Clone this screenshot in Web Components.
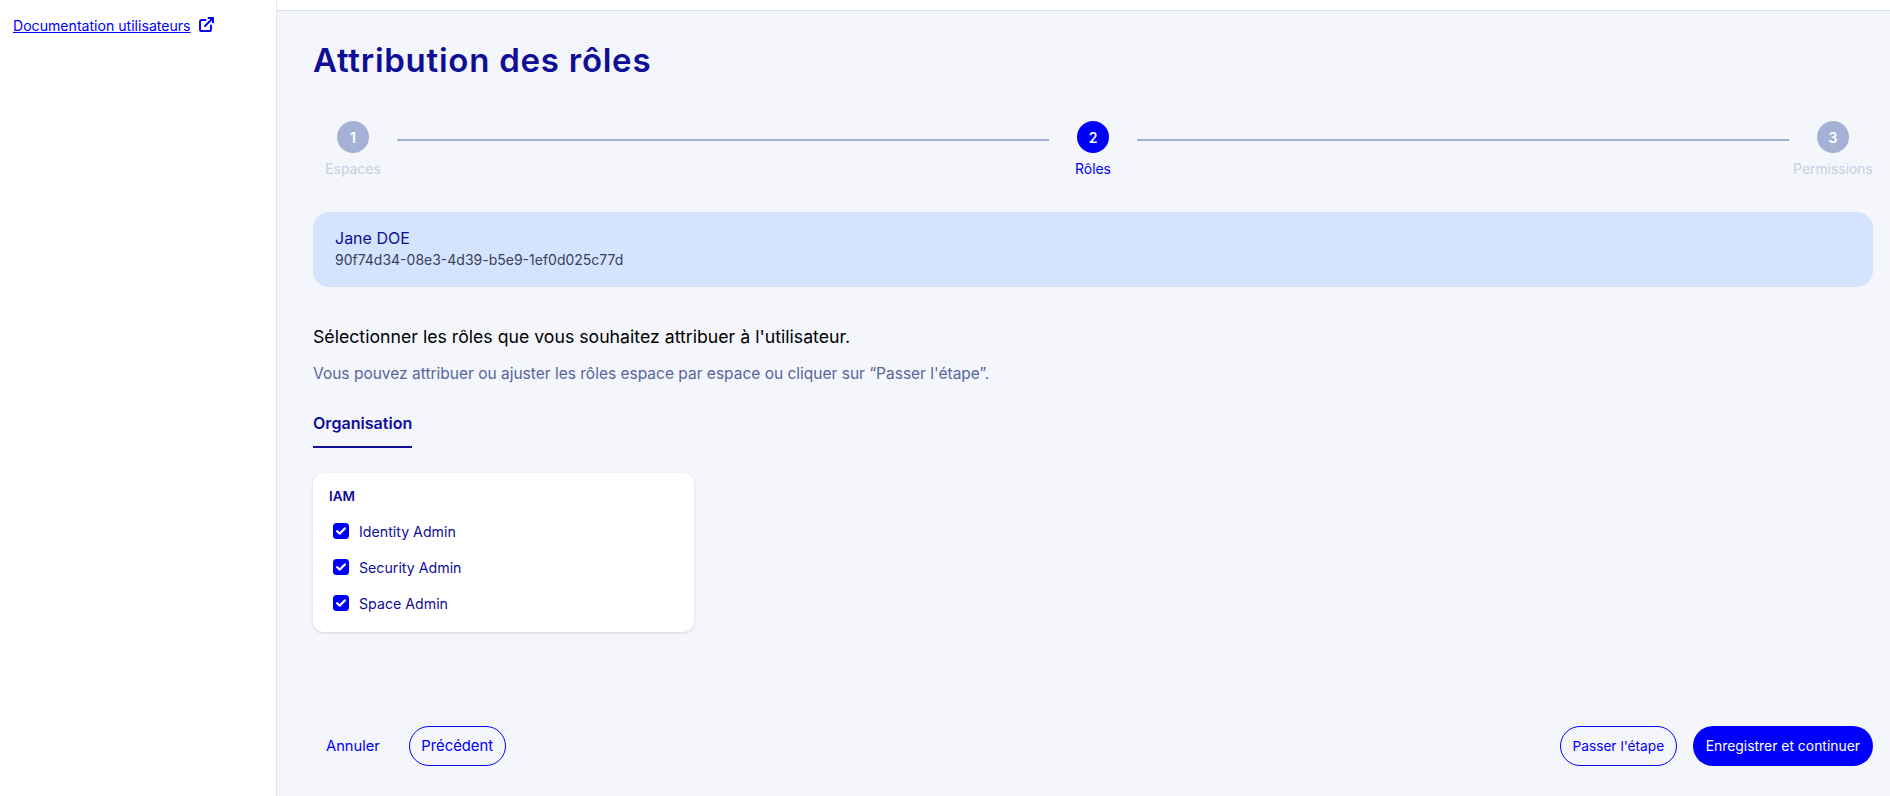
<!DOCTYPE html>
<html lang="fr"><head><meta charset="utf-8"><title>Attribution des rôles</title>
<style>
html,body{margin:0;height:100%;background:#fff;font-family:Inter,"Liberation Sans",sans-serif;font-size:14px}
</style></head><body>
<x-app>
  <x-sidebar slot="side"></x-sidebar>
  <h-title slot="title">Attribution des rôles</h-title>
  <x-stepper slot="main">
    <x-step n="1" label="Espaces"></x-step>
    <x-step n="2" label="Rôles" active></x-step>
    <x-step n="3" label="Permissions"></x-step>
  </x-stepper>
  <x-user slot="main" name="Jane DOE" uid="90f74d34-08e3-4d39-b5e9-1ef0d025c77d"></x-user>
  <x-intro slot="main"></x-intro>
  <x-tab slot="main">Organisation</x-tab>
  <x-roles slot="main" title="IAM">
    <x-check>Identity Admin</x-check>
    <x-check>Security Admin</x-check>
    <x-check>Space Admin</x-check>
  </x-roles>
  <x-footer slot="foot">
    <div slot="left"><x-btn kind="text" style="font-size:14.7px">Annuler</x-btn><x-btn kind="outline" style="font-size:14.8px">Précédent</x-btn></div>
    <div slot="right"><x-btn kind="outline" style="font-size:13.7px">Passer l'étape</x-btn><x-btn kind="solid" style="font-size:13.9px">Enregistrer et continuer</x-btn></div>
  </x-footer>
</x-app>
<script>
function def(name,css,html){
  customElements.define(name,class extends HTMLElement{
    connectedCallback(){
      if(this.shadowRoot)return;
      const r=this.attachShadow({mode:'open'});
      r.innerHTML='<style>'+css+'</style>'+(typeof html==='function'?html(this):html);
    }
  });
}
const attr=(e,n)=>e.getAttribute(n)||'';
def('x-app',`
  :host{display:grid;grid-template-columns:277px 1fr;height:796px;overflow:hidden;background:#fff}
  aside{border-right:1px solid #e3e7f1;background:#fff}
  .right{display:flex;flex-direction:column;min-width:0;background:#f4f6fb}
  .top{height:10px;background:#fff;border-bottom:1px solid #d5deef}
  .body{flex:1;display:flex;flex-direction:column;padding:29px 17px 30px 36px;min-height:0}
  .main{display:flex;flex-direction:column}
  .foot{margin-top:auto}
`,`<aside><slot name="side"></slot></aside>
  <div class="right"><div class="top"></div><div class="body">
    <slot name="title"></slot>
    <div class="main"><slot name="main"></slot></div>
    <div class="foot"><slot name="foot"></slot></div>
  </div></div>`);
def('x-sidebar',`
  :host{display:block;padding:16px 13px}
  .l{display:flex;align-items:center;gap:8px;height:20px;color:#00f}
  a{color:#00f;text-decoration:underline;font-size:14.1px;line-height:20px;white-space:nowrap}
  svg{display:block;margin-top:-3px}
`,`<div class="l"><a href="#">Documentation utilisateurs</a>
  <svg width="15" height="15" viewBox="0 0 15 15" fill="none" stroke="#00f" stroke-width="1.9" stroke-linecap="round" stroke-linejoin="round"><path d="M6.5 3H2.6C1.7 3 1 3.7 1 4.6v7.8C1 13.3 1.7 14 2.6 14h7.8c.9 0 1.6-.7 1.6-1.6V8.5"/><path d="M6 9 14 1"/><path d="M9.5 1H14v4.5"/></svg></div>`);
def('h-title',`
  :host{display:block;height:40px;margin-bottom:41px;font:600 33px/40px Inter,"Liberation Sans",sans-serif;color:#0e0e96;letter-spacing:.75px}
`,`<slot></slot>`);
def('x-stepper',`
  :host{display:flex;align-items:flex-start}
  ::slotted(x-step:not(:last-child)){flex:1}
`,`<slot></slot>`);
def('x-step',`
  :host{display:flex;align-items:flex-start}
  .s{width:80px;flex:none;display:flex;flex-direction:column;align-items:center;gap:6px}
  .c{width:32px;height:32px;border-radius:50%;background:#a5b1d4;color:#fff;display:flex;align-items:center;justify-content:center;font-weight:600;font-size:14px}
  .t{font-size:13.9px;line-height:20px;color:#c5cfe6;white-space:nowrap}
  :host([active]) .c{background:#00f}
  :host([active]) .t{color:#00f}
  .line{flex:1;height:2px;background:#a0aed0;margin:18px 4px 0}
`,e=>`<div class="s"><div class="c">${attr(e,'n')}</div><div class="t">${attr(e,'label')}</div></div>${e.nextElementSibling?'<div class="line"></div>':''}`);
def('x-user',`
  :host{display:block;margin-top:33px;background:#d4e4ff;border-radius:16px;padding:16px 22px 17px;color:#0e0e96}
  .n{font-size:16px;line-height:20px}
  .u{font-size:14px;line-height:20px;margin-top:2px;color:#3b3f57}
`,e=>`<div class="n">${attr(e,'name')}</div><div class="u">${attr(e,'uid')}</div>`);
def('x-intro',`
  :host{display:block;margin-top:38px}
  .a{font-size:17.7px;line-height:24px;color:#000;white-space:nowrap}
  .b{font-size:15.5px;line-height:20px;margin-top:15px;color:#57659c;white-space:nowrap}
`,`<div class="a">Sélectionner les rôles que vous souhaitez attribuer à l'utilisateur.</div><div class="b">Vous pouvez attribuer ou ajuster les rôles espace par espace ou cliquer sur “Passer l'étape”.</div>`);
def('x-tab',`
  :host{display:block;align-self:flex-start;margin-top:29px;padding-bottom:13px;border-bottom:2px solid #0e0e96;color:#0e0e96;font-weight:600;font-size:16.1px;line-height:20px}
`,`<slot></slot>`);
def('x-roles',`
  :host{display:block;align-self:flex-start;box-sizing:border-box;width:381px;margin-top:25px;background:#fff;border-radius:10px;box-shadow:0 1px 3px rgba(20,30,80,.14);padding:13px 16px 11px}
  .h{font-weight:600;font-size:13.5px;line-height:20px;color:#0e0e96;margin-bottom:7px}
`,e=>`<div class="h">${attr(e,'title')}</div><slot></slot>`);
def('x-check',`
  :host{display:flex;align-items:center;height:36px;padding-left:4px;gap:10px;color:#0e0e96;font-size:14.2px}
  .b{width:16px;height:16px;border-radius:3.5px;background:#00f;display:flex;align-items:center;justify-content:center;flex:none}
`,`<div class="b"><svg width="10" height="8" viewBox="0 0 10 8" fill="none" stroke="#fff" stroke-width="2.2" stroke-linecap="round" stroke-linejoin="round"><path d="M1.2 4.2 3.8 6.6 8.8 1.4"/></svg></div><span><slot></slot></span>`);
def('x-footer',`
  :host{display:flex;justify-content:space-between;align-items:center}
  ::slotted(div){display:flex;align-items:center;gap:16px}
`,`<slot name="left"></slot><slot name="right"></slot>`);
def('x-btn',`
  :host{display:inline-flex;align-items:center;justify-content:center;height:40px;box-sizing:border-box;border-radius:20px;padding:0 13px;color:#00f;white-space:nowrap}
  :host([kind=outline]){border:1.5px solid #00f;padding:0 11.5px}
  :host([kind=solid]){background:#00f;color:#fff}
`,`<slot></slot>`);
</script>
</body></html>
